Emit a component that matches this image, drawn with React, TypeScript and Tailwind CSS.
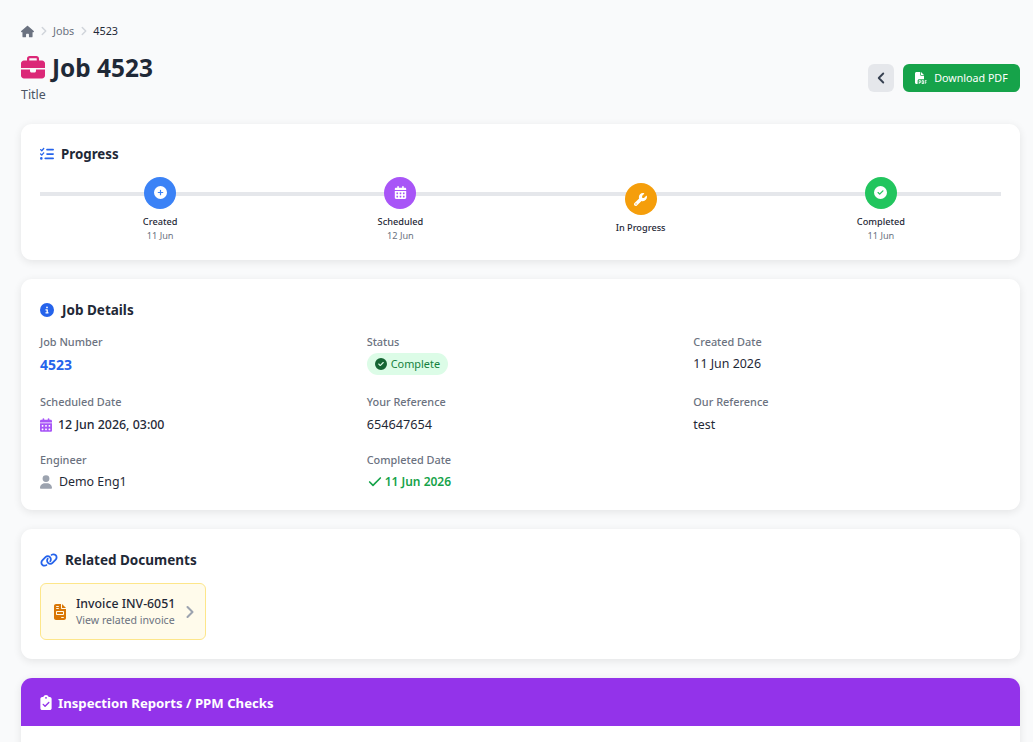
import type { ReactNode } from "react";
import { Check, ChevronLeft, ChevronRight } from "lucide-react";
import {
  FaBriefcase,
  FaCalendarDays,
  FaCircleCheck,
  FaCircleInfo,
  FaCirclePlus,
  FaClipboardCheck,
  FaFileInvoice,
  FaFilePdf,
  FaHouse,
  FaLink,
  FaListCheck,
  FaUser,
  FaWrench,
} from "react-icons/fa6";

const steps = [
  { label: "Created", date: "11 Jun", color: "bg-[#3b82f6]", icon: <FaCirclePlus /> },
  { label: "Scheduled", date: "12 Jun", color: "bg-[#a855f7]", icon: <FaCalendarDays /> },
  { label: "In Progress", date: "", color: "bg-[#f59e0b]", icon: <FaWrench /> },
  { label: "Completed", date: "11 Jun", color: "bg-[#22c55e]", icon: <FaCircleCheck /> },
];

function Card({ children, className = "" }: { children: ReactNode; className?: string }) {
  return (
    <section className={`bg-white rounded-[11px] shadow-[0_2px_8px_rgba(0,0,0,0.09)] px-[19px] mb-[19px] ${className}`}>
      {children}
    </section>
  );
}

function Field({ label, children }: { label: string; children: ReactNode }) {
  return (
    <div>
      <div className="text-[10.9px] leading-[16px] font-medium text-[#6b7280] mb-[4px]">{label}</div>
      {children}
    </div>
  );
}

export default function App() {
  return (
    <div className="h-[742px] overflow-hidden bg-[#f9fafb] pl-[21px] pr-[13px] pt-[22px] text-[#1f2937] font-['Noto_Sans','Open_Sans',sans-serif]">
      {/* Breadcrumb */}
      <nav className="flex items-center h-[18px] text-[10.8px]">
        <FaHouse className="text-[#6b7280] text-[13px]" />
        <ChevronRight size={14} strokeWidth={2.5} className="text-[#d1d5db] ml-[3px] mr-[2px]" />
        <span className="text-[#6b7280]">Jobs</span>
        <ChevronRight size={14} strokeWidth={2.5} className="text-[#d1d5db] ml-[3px] mr-[2px]" />
        <span className="text-[#1f2937]">4523</span>
      </nav>

      {/* Heading */}
      <div className="flex items-start justify-between mt-[7px] mb-[21px] h-[56px]">
        <div className="pt-[5px]">
          <h1 className="flex items-center gap-[7px] text-[24.4px] leading-[32px] font-bold">
            <FaBriefcase className="text-[#db2777] text-[24px]" />
            Job 4523
          </h1>
          <p className="text-[12.4px] leading-[20px] text-[#4b5563] mt-[1px]">Title</p>
        </div>
        <div className="flex items-center gap-[9px] mt-[17px]">
          <button className="w-[26px] h-[28px] rounded-[6px] bg-[#e5e7eb] flex items-center justify-center text-[#374151]">
            <ChevronLeft size={18} strokeWidth={2.5} />
          </button>
          <button className="w-[117px] h-[28px] rounded-[6px] bg-[#16a34a] text-white text-[10.7px] flex items-center justify-center gap-[7px]">
            <FaFilePdf className="text-[12px]" />
            Download PDF
          </button>
        </div>
      </div>

      {/* Progress */}
      <Card className="h-[136px] pt-[19px]">
        <h2 className="flex items-center gap-[7px] text-[13.3px] leading-[22px] font-bold">
          <FaListCheck className="text-[#2563eb] text-[14px]" />
          Progress
        </h2>
        <div className="relative mt-[12px] flex items-center h-[64px]">
          <div className="absolute left-0 right-0 top-[15px] h-[4px] bg-[#e5e7eb]" />
          {steps.map((s) => (
            <div key={s.label} className="relative flex-1 flex flex-col items-center">
              <div className={`w-[32px] h-[32px] rounded-full ${s.color} text-white text-[13px] flex items-center justify-center`}>
                {s.icon}
              </div>
              <div className="mt-[6px] text-[9.2px] leading-[14px] font-medium">{s.label}</div>
              {s.date && <div className="text-[9.2px] leading-[13px] text-[#6b7280]">{s.date}</div>}
            </div>
          ))}
        </div>
      </Card>

      {/* Job details */}
      <Card className="h-[231px] pt-[20px]">
        <h2 className="flex items-center gap-[8px] text-[13.5px] leading-[22px] font-bold">
          <FaCircleInfo className="text-[#2563eb] text-[14px]" />
          Job Details
        </h2>
        <div className="grid grid-cols-3 gap-x-[19px] mt-[13px]">
          <div className="h-[60px]">
            <Field label="Job Number">
              <div className="text-[14px] leading-[22px] font-bold text-[#2563eb]">4523</div>
            </Field>
          </div>
          <div className="h-[60px]">
            <Field label="Status">
              <span className="flex w-fit items-center gap-[4px] h-[22px] px-[8px] -mt-[1px] rounded-full bg-[#dcfce7] text-[#15803d] text-[10.9px]">
                <FaCircleCheck className="text-[#166534] text-[12px]" />
                Complete
              </span>
            </Field>
          </div>
          <div className="h-[60px]">
            <Field label="Created Date">
              <div className="text-[12.4px] leading-[22px] -mt-[1px]">11 Jun 2026</div>
            </Field>
          </div>
          <div className="h-[58px]">
            <Field label="Scheduled Date">
              <div className="flex items-center gap-[6px] text-[12.4px] leading-[22px] font-medium">
                <FaCalendarDays className="text-[#a855f7] w-[12px] h-[14px]" />
                12 Jun 2026, 03:00
              </div>
            </Field>
          </div>
          <div className="h-[58px]">
            <Field label="Your Reference">
              <div className="text-[12.7px] leading-[22px] -mt-[1px]">654647654</div>
            </Field>
          </div>
          <div className="h-[58px]">
            <Field label="Our Reference">
              <div className="text-[12.4px] leading-[22px]">test</div>
            </Field>
          </div>
          <Field label="Engineer">
            <div className="flex items-center gap-[7px] text-[12.4px] leading-[22px] -mt-[1px]">
              <FaUser className="text-[#9ca3af] w-[12px] h-[14px]" />
              Demo Eng1
            </div>
          </Field>
          <Field label="Completed Date">
            <div className="flex items-center gap-[2px] text-[12px] leading-[22px] font-semibold text-[#16a34a] -mt-[1px]">
              <Check size={16} strokeWidth={2.5} />
              11 Jun 2026
            </div>
          </Field>
        </div>
      </Card>

      {/* Related documents */}
      <Card className="h-[130px] pt-[20px]">
        <h2 className="flex items-center gap-[7px] text-[13.5px] leading-[22px] font-bold">
          <FaLink className="text-[#2563eb] text-[18px]" />
          Related Documents
        </h2>
        <div className="mt-[12px] w-[166px] h-[57px] rounded-[6px] border border-[#fde68a] bg-[#fffbeb] flex items-center pl-[13px] pr-[5px]">
          <FaFileInvoice className="text-[#d97706] w-[12px] h-[16px]" />
          <div className="ml-[10px] flex-1">
            <div className="text-[12.3px] leading-[18px] font-medium">Invoice INV-6051</div>
            <div className="text-[10.6px] leading-[15px] text-[#6b7280]">View related invoice</div>
          </div>
          <ChevronRight size={20} strokeWidth={2.5} className="text-[#9ca3af]" />
        </div>
      </Card>

      {/* Inspection reports */}
      <section className="bg-white rounded-[11px] overflow-hidden shadow-[0_2px_8px_rgba(0,0,0,0.09)] h-[200px]">
        <h2 className="flex items-center gap-[6px] h-[48px] pt-[3px] px-[19px] bg-[#9333ea] text-white text-[13.2px] font-bold">
          <FaClipboardCheck className="w-[12px] h-[15px] -mt-[2px]" />
          Inspection Reports / PPM Checks
        </h2>
      </section>
    </div>
  );
}
